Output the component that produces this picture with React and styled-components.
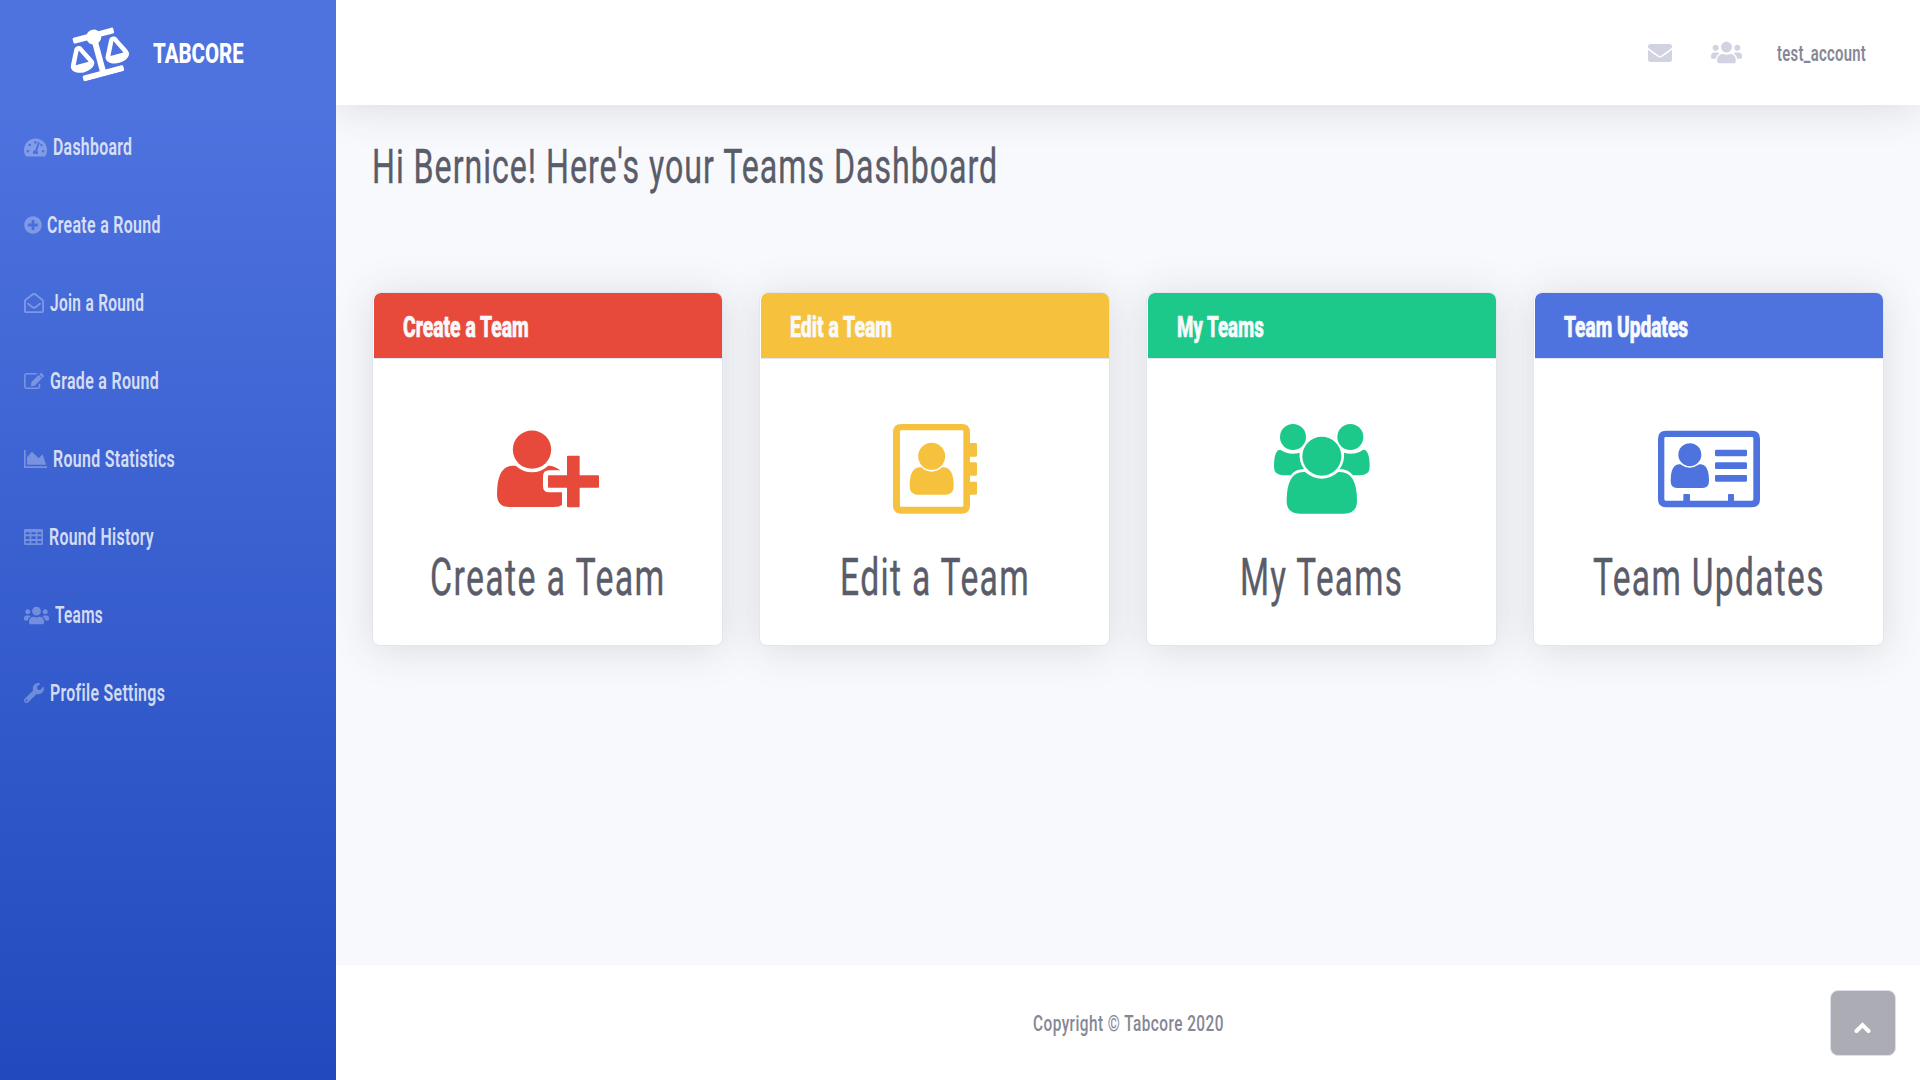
import React, { useLayoutEffect, useRef, useState } from "react";
import styled, { createGlobalStyle } from "styled-components";
import {
  FaBalanceScale,
  FaTachometerAlt,
  FaPlusCircle,
  FaRegEnvelopeOpen,
  FaUsers,
  FaWrench,
  FaEnvelope,
} from "react-icons/fa";

const GlobalStyle = createGlobalStyle`
  * { box-sizing: border-box; }
  body {
    margin: 0;
    background: #f8f9fc;
    font-family: Roboto, "Liberation Sans", sans-serif;
    color: #858796;
    overflow: hidden;
  }
`;

const FitBox = styled.span`
  display: inline-block;
  width: ${(p) => p.$width}px;
  white-space: nowrap;
  text-align: left;
`;

const FitText = styled.span`
  display: inline-block;
  transform-origin: 0 50%;
`;

/* Condenses its text horizontally so that it fills the given width. */
function Condensed({ width, children }) {
  const ref = useRef(null);
  const [scale, setScale] = useState(0.6);
  useLayoutEffect(() => {
    setScale(width / ref.current.offsetWidth);
  }, [width, children]);
  return (
    <FitBox $width={width}>
      <FitText ref={ref} style={{ transform: `scaleX(${scale})` }}>
        {children}
      </FitText>
    </FitBox>
  );
}

const Page = styled.div`
  display: flex;
  height: 1080px;
`;

const Sidebar = styled.aside`
  position: relative;
  z-index: 1;
  width: 336px;
  flex: none;
  background: linear-gradient(180deg, #4e73df 10%, #224abe 100%);
`;

const Brand = styled.a`
  display: flex;
  align-items: center;
  height: 108px;
  padding-left: 68px;
  gap: 25px;
  color: #fff;
  font-size: 28.5px;
  line-height: 36px;
  font-weight: 800;
  svg {
    width: 60px;
    height: 48px;
    margin-bottom: 3px;
    transform: rotate(-15deg);
  }
`;

const NavItem = styled.a`
  display: flex;
  align-items: center;
  height: 78px;
  padding-left: 24px;
  gap: ${(p) => p.$gap}px;
  color: rgba(255, 255, 255, 0.8);
  font-size: 24px;
  line-height: 30px;
  font-weight: 600;
  letter-spacing: 0.02em;
  svg {
    flex: none;
    color: rgba(255, 255, 255, 0.3);
  }
`;

const Main = styled.div`
  flex: 1;
  display: flex;
  flex-direction: column;
  min-width: 0;
`;

const Topbar = styled.header`
  height: 105px;
  flex: none;
  display: flex;
  align-items: center;
  justify-content: flex-end;
  padding-right: 54px;
  background: #fff;
  box-shadow: 0 3.6px 42px 0 rgba(58, 59, 69, 0.15);
  font-size: 22.5px;
  line-height: 30px;
  font-weight: 600;
  letter-spacing: 0.02em;
  color: #858796;
  svg {
    color: #d1d3e2;
  }
`;

const TopIcon = styled.span`
  display: flex;
  margin-right: ${(p) => p.$after}px;
`;

const Content = styled.main`
  flex: 1;
  padding: 34px 36px 0;
`;

const Heading = styled.h1`
  margin: 0 0 97px;
  font-size: 49px;
  line-height: 56px;
  font-weight: 400;
  letter-spacing: 0.03em;
  color: #5a5c69;
  -webkit-text-stroke: 0.4px #5a5c69;
`;

const Cards = styled.div`
  display: grid;
  grid-template-columns: repeat(4, 1fr);
  gap: 36px;
`;

const Card = styled.section`
  height: 354px;
  border: 1px solid #e3e6f0;
  border-radius: 8px;
  background: #fff;
  overflow: hidden;
  box-shadow: 0 3.6px 42px 0 rgba(58, 59, 69, 0.15);
`;

const CardHeader = styled.div`
  height: 66px;
  margin-left: 1px;
  padding: 16px 29px 14px;
  border-bottom: 1px solid #e3e6f0;
  border-top-left-radius: 7px;
  background: ${(p) => p.$color};
  color: #f8f9fc;
  font-size: 29px;
  line-height: 36px;
  font-weight: 800;
  -webkit-text-stroke: 0.7px #f8f9fc;
`;

const CardBody = styled.div`
  display: flex;
  flex-direction: column;
  align-items: center;
  padding-top: 65px;
  color: #5a5c69;
  font-size: 52px;
  line-height: 60px;
  font-weight: 400;
  letter-spacing: 0.04em;
  -webkit-text-stroke: 0.4px #5a5c69;
  svg {
    height: 90px;
    margin-bottom: 34px;
    color: ${(p) => p.$color};
  }
`;

const Footer = styled.footer`
  height: 115px;
  flex: none;
  display: flex;
  justify-content: center;
  padding-top: 44px;
  background: #fff;
  font-size: 22px;
  line-height: 30px;
  font-weight: 500;
  letter-spacing: 0.03em;
`;

const ScrollTop = styled.a`
  position: fixed;
  right: 24px;
  bottom: 24px;
  width: 66px;
  height: 66px;
  display: flex;
  justify-content: center;
  padding-top: 31px;
  padding-right: 1px;
  border: 1px solid #dddfeb;
  border-radius: 8px;
  background: #acacb4;
`;

const EditIcon = () => (
  <svg width="20" height="16" viewBox="0 0 60 48" fill="none" stroke="currentColor">
    <path d="M38 2.5H7A4.500 4.500 0 0 0 2.500 7v34A4.500 4.500 0 0 0 7 45.500h35a4.500 4.500 0 0 0 4.500-4.500V32" strokeWidth="4.500" />
    <path fill="currentColor" stroke="none" d="M22 28 44 6l10 10-22 22-11 2zM46 4l3-3q2-2 4 0l6 6q2 2 0 4l-3 3z" />
  </svg>
);

const AreaChartIcon = () => (
  <svg width="23" height="18" viewBox="0 0 69 54" fill="currentColor">
    <path d="M0 0h5v49h64v5H0zM9 44V22L24 5l20 20 12-12 10 31z" />
  </svg>
);

const TableIcon = () => (
  <svg width="19" height="16" viewBox="0 0 57 48" fill="currentColor" fillRule="evenodd">
    <path d="M4 0h49a4 4 0 0 1 4 4v40a4 4 0 0 1-4 4H4a4 4 0 0 1-4-4V4a4 4 0 0 1 4-4zM5 10v6h12v-6zM22 10v6h13v-6zM40 10v6h12v-6zM5 22v8h12v-8zM22 22v8h13v-8zM40 22v8h12v-8zM5 36v7h12v-7zM22 36v7h13v-7zM40 36v7h12v-7z" />
  </svg>
);

const AddPersonIcon = () => (
  <svg width="102" viewBox="411 430 306 270" fill="currentColor">
    <circle cx="516" cy="507" r="57.500" />
    <path d="M467 555Q490 575 516 575t49-20q20 0 36 14h-34q-18 0-18 18v30q0 18 18 18h39v38q-9 6-24 6H448q-37 0-37-38 0-86 47-86z" />
    <path d="M624 525h32q3 0 3 3v56h55q3 0 3 3v31q0 3-3 3h-55v56q0 3-3 3h-32q-3 0-3-3v-56h-54q-3 0-3-3v-31q0-3 3-3h54v-56q0-3 3-3z" />
  </svg>
);

const AddressBookIcon = () => (
  <svg width="84" viewBox="429 430 252 270" fill="currentColor">
    <path fillRule="evenodd" d="M454 430h181q25 0 25 25v32h17q4 0 4 4v33q0 4-4 4h-17v17h17q4 0 4 4v32q0 4-4 4h-17v18h17q4 0 4 4v31q0 4-4 4h-17v32q0 25-25 25H454q-25 0-25-25V455q0-25 25-25zM453 449q-3 0-3 3v223q0 3 3 3h184q3 0 3-3V452q0-3-3-3z" />
    <circle cx="545" cy="527" r="40.500" />
    <path d="M514 560q14 13 31 13t31-13q35-4 35 56 0 26-23 26h-86q-23 0-23-26 0-60 35-56z" />
  </svg>
);

const GroupIcon = () => (
  <svg width="96" viewBox="402 430 288 270" fill="currentColor">
    <circle cx="459" cy="469" r="39" />
    <circle cx="631" cy="469" r="39" />
    <circle cx="545.500" cy="526.500" r="58.500" />
    <path d="M421 507q17 12 38 12 10 0 20-3-3 27 13 49-25 0-40 19h-20q-30 0-30-25 0-52 19-52zM670 507q-17 12-38 12-10 0-20-3 3 27-13 49 25 0 40 19h20q30 0 30-25 0-52-19-52z" />
    <path d="M495 574q24 20 50 20t50-20q56-4 56 86 0 39-39 39H479q-39 0-39-39 0-90 55-86z" />
  </svg>
);

const IdCardIcon = () => (
  <svg width="102" viewBox="414 430 306 270" fill="currentColor">
    <path fillRule="evenodd" d="M438 450h258q24 0 24 24v182q0 24-24 24H438q-24 0-24-24V474q0-24 24-24zM437 469q-4 0-4 4v183q0 4 4 4h53v-17q0-3 3-3h14q3 0 3 3v17h114v-17q0-3 3-3h12q3 0 3 3v17h54q4 0 4-4V473q0-4-4-4z" />
    <circle cx="509.500" cy="522" r="34.500" />
    <path d="M481 551q13 10 28 10t29-10q29-2 29 50 0 21-19 21h-77q-19 0-19-21 0-52 29-50z" />
    <rect x="585" y="507" width="96" height="20" rx="4" />
    <rect x="585" y="545" width="96" height="20" rx="4" />
    <rect x="585" y="583" width="96" height="20" rx="4" />
  </svg>
);

const NAV = [
  { label: "Dashboard", width: 79, gap: 5.5, icon: <FaTachometerAlt size="23" /> },
  { label: "Create a Round", width: 114, gap: 5, icon: <FaPlusCircle size="18" /> },
  { label: "Join a Round", width: 94, gap: 6, icon: <FaRegEnvelopeOpen size="20" /> },
  { label: "Grade a Round", width: 109, gap: 6, icon: <EditIcon /> },
  { label: "Round Statistics", width: 122, gap: 6, icon: <AreaChartIcon /> },
  { label: "Round History", width: 105, gap: 5.5, icon: <TableIcon /> },
  { label: "Teams", width: 48, gap: 6, icon: <FaUsers size="25" /> },
  { label: "Profile Settings", width: 115, gap: 6, icon: <FaWrench size="20" /> },
];

const CARDS = [
  { label: "Create a Team", small: 126, large: 236, color: "#e74a3b", icon: <AddPersonIcon /> },
  { label: "Edit a Team", small: 102, large: 190, color: "#f6c23e", icon: <AddressBookIcon /> },
  { label: "My Teams", small: 87, large: 163, color: "#1cc88a", icon: <GroupIcon /> },
  { label: "Team Updates", small: 124, large: 232, color: "#4e73df", icon: <IdCardIcon /> },
];

export default function App() {
  return (
    <>
      <GlobalStyle />
      <Page>
        <Sidebar>
          <Brand>
            <FaBalanceScale />
            <Condensed width={91}>TABCORE</Condensed>
          </Brand>
          <nav>
            {NAV.map((item) => (
              <NavItem key={item.label} $gap={item.gap}>
                {item.icon}
                <Condensed width={item.width}>{item.label}</Condensed>
              </NavItem>
            ))}
          </nav>
        </Sidebar>
        <Main>
          <Topbar>
            <TopIcon $after={39}>
              <FaEnvelope size="24" />
            </TopIcon>
            <TopIcon $after={35}>
              <FaUsers size="31" />
            </TopIcon>
            <Condensed width={89}>test_account</Condensed>
          </Topbar>
          <Content>
            <Heading>
              <Condensed width={626}>Hi Bernice! Here's your Teams Dashboard</Condensed>
            </Heading>
            <Cards>
              {CARDS.map((card) => (
                <Card key={card.label}>
                  <CardHeader $color={card.color}>
                    <Condensed width={card.small}>{card.label}</Condensed>
                  </CardHeader>
                  <CardBody $color={card.color}>
                    {card.icon}
                    <Condensed width={card.large}>{card.label}</Condensed>
                  </CardBody>
                </Card>
              ))}
            </Cards>
          </Content>
          <Footer>
            <Condensed width={191}>Copyright © Tabcore 2020</Condensed>
          </Footer>
        </Main>
      </Page>
      <ScrollTop>
        <svg width="17" height="12" viewBox="0 0 17 12" fill="none" stroke="#fff" strokeWidth="4" strokeLinecap="round">
          <path d="M2.500 9 8.500 3l6 6" />
        </svg>
      </ScrollTop>
    </>
  );
}
